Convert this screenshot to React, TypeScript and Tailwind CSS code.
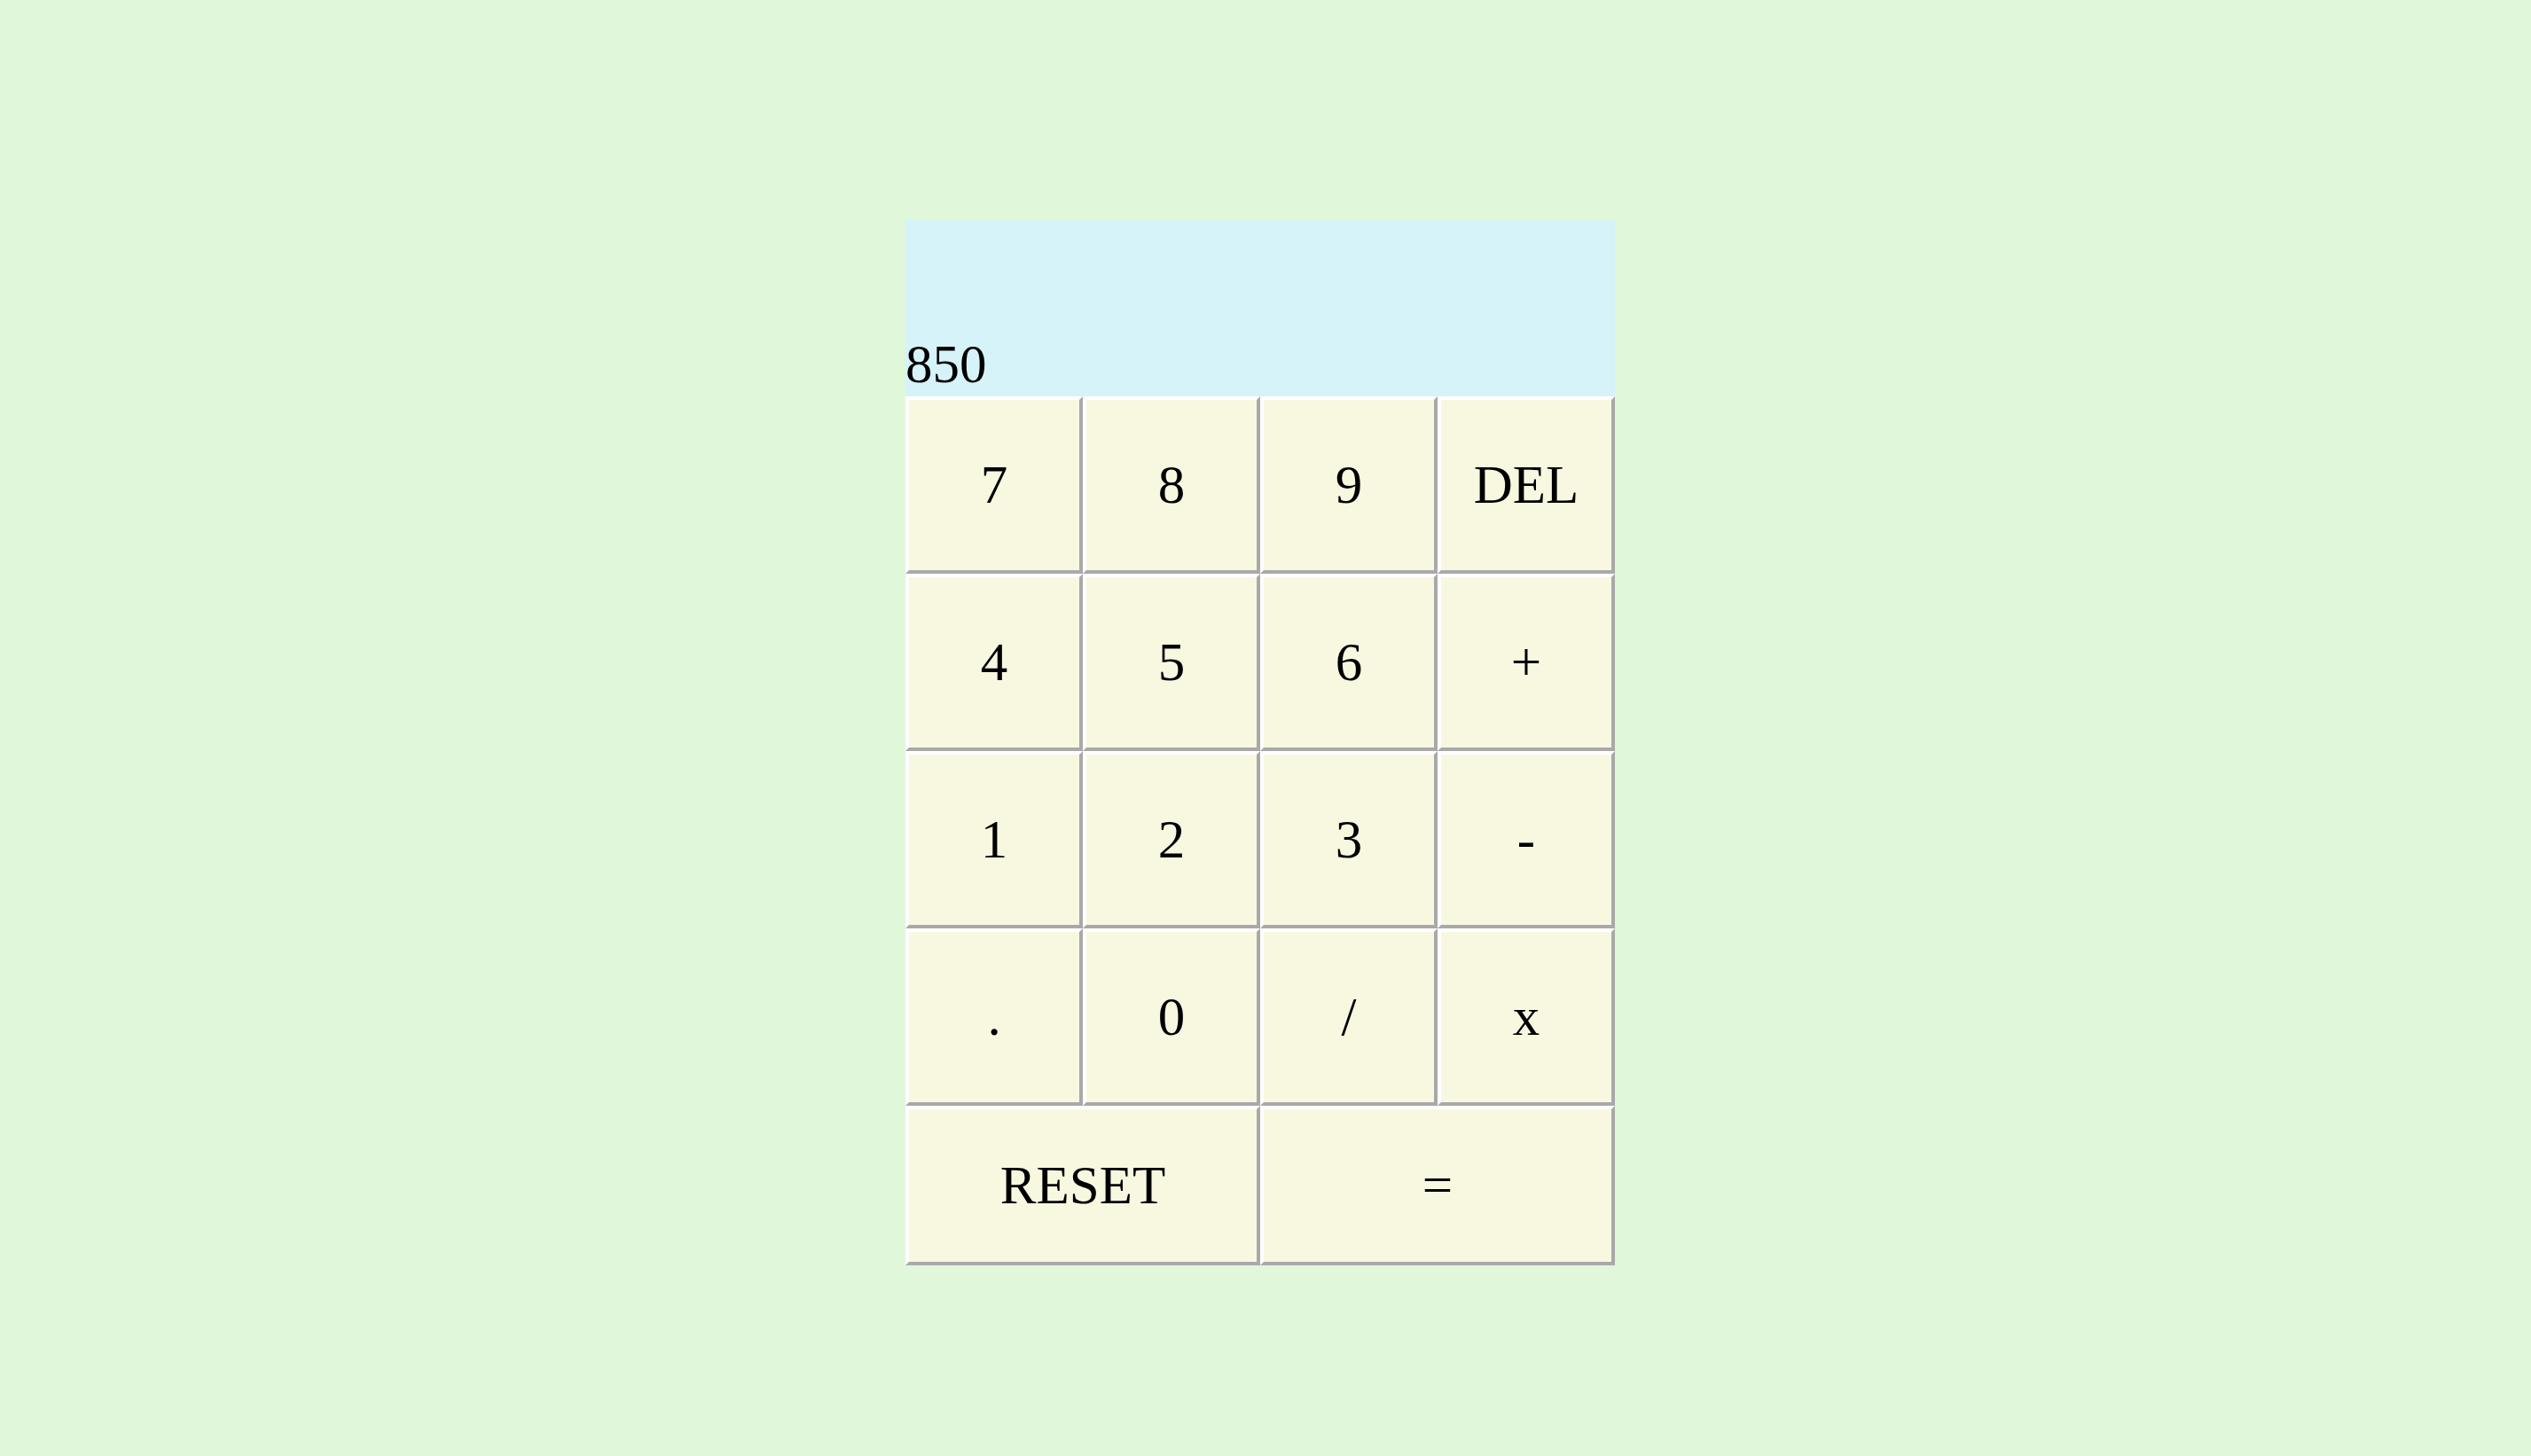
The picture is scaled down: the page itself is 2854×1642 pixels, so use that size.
const keys: string[] = ["7", "8", "9", "DEL", "4", "5", "6", "+", "1", "2", "3", "-", ".", "0", "/", "x"];

const btn =
  "flex items-center justify-center bg-[#f8f8e1] border-4 border-t-white border-l-white border-b-[#a9a9a9] border-r-[#a9a9a9] text-black text-[61px]";

export default function App() {
  return (
    <div className="min-h-screen w-full bg-[#e1f7da] flex justify-center pt-[247px] pr-3 font-['Liberation_Serif',serif]">
      <div className="w-[800px]">
        <div className="h-[200px] bg-[#d6f3fa] flex items-end">
          <span className="text-[61px] leading-[1.18] text-black">850</span>
        </div>
        <div className="grid grid-cols-4">
          {keys.map(k => (
            <button key={k} className={`${btn} h-[200px]`}>
              {k}
            </button>
          ))}
          <button className={`${btn} h-[180px] col-span-2`}>RESET</button>
          <button className={`${btn} h-[180px] col-span-2`}>=</button>
        </div>
      </div>
    </div>
  );
}
